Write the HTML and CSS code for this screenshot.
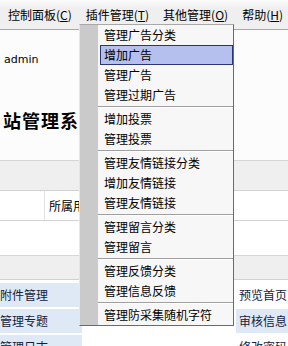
FILE: index.html
```html
<!DOCTYPE html>
<html lang="zh-CN">
<head>
  <meta charset="UTF-8" />
  <title>网站管理系统</title>
  <link rel="stylesheet" href="styles.css">
</head>
<body>

<div class="menubar">
  <span class="menu-title">控制面板(<u>C</u>)</span>
  <span class="menu-title">插件管理(<u>T</u>)</span>
  <span class="menu-title">其他管理(<u>O</u>)</span>
  <span class="menu-title">帮助(<u>H</u>)</span>
</div>

<div class="head">
  <div class="user">admin</div>
  <h1 class="site-title">站管理系统</h1>
</div>

<div class="band"></div>

<div class="owner-row">
  <div class="owner-left"></div>
  <div class="owner-label">所属用户</div>
</div>

<div class="blank"></div>

<div class="band band-low"></div>

<div class="links">
  <div class="link blue">附件管理</div>
  <div class="link"></div>
  <div class="link">预览首页</div>
  <div class="link blue">管理专题</div>
  <div class="link"></div>
  <div class="link blue">审核信息</div>
  <div class="link blue">管理日志</div>
  <div class="link"></div>
  <div class="link">修改密码</div>
</div>

<!-- open dropdown of 插件管理 -->
<div class="dropdown">
  <div class="item">管理广告分类</div>
  <div class="item active">增加广告</div>
  <div class="item">管理广告</div>
  <div class="item">管理过期广告</div>
  <div class="sep"></div>
  <div class="item">增加投票</div>
  <div class="item">管理投票</div>
  <div class="sep"></div>
  <div class="item">管理友情链接分类</div>
  <div class="item">增加友情链接</div>
  <div class="item">管理友情链接</div>
  <div class="sep"></div>
  <div class="item">管理留言分类</div>
  <div class="item">管理留言</div>
  <div class="sep"></div>
  <div class="item">管理反馈分类</div>
  <div class="item">管理信息反馈</div>
  <div class="sep"></div>
  <div class="item">管理防采集随机字符</div>
</div>

</body>
</html>
```

FILE: styles.css
```css
body {
  margin: 0;
  font-family: "Noto Sans CJK SC", "DejaVu Sans", sans-serif;
  font-size: 12px;
  color: #000;
  background: #fff;
  overflow: hidden;
  position: relative;
}
u {
  text-decoration: underline;
}
.menubar {
  height: 29px;
  display: flex;
  align-items: center;
  padding-left: 1px;
  background: linear-gradient(#fbfbfb, #efefef 8px);
  border-bottom: 1px solid #a8a8a8;
  white-space: nowrap;
}
.menu-title {
  padding: 0 7px;
  line-height: 18px;
}
.head {
  height: 130px;
  background: #fcfcfc;
  overflow: hidden;
}
.user {
  padding: 24px 0 0 4px;
  font-family: "DejaVu Sans", sans-serif;
  font-size: 11px;
  line-height: 12px;
}
.site-title {
  margin: 43px 0 0 3px;
  font-family: "Noto Sans CJK SC", serif;
  font-size: 18px;
  line-height: 22px;
  font-weight: bold;
  letter-spacing: 1px;
  white-space: nowrap;
}
.band {
  height: 29px;
  background: #efefef;
  border-top: 1px solid #d6d6d6;
  border-bottom: 1px solid #d2d2d2;
}
.owner-row {
  display: flex;
  height: 29px;
  border-bottom: 1px solid #d2d2d2;
  background: #fff;
}
.owner-left {
  width: 44px;
  border-right: 1px solid #e2e2e2;
}
.owner-label {
  padding-left: 4px;
  line-height: 29px;
}
.blank {
  height: 34px;
  background: #fff;
}
.band-low {
  height: 23px;
}
.links {
  display: grid;
  grid-template-columns: 82px 154px 1fr;
  grid-auto-rows: 24px;
  row-gap: 2px;
  padding-top: 3px;
  background: #fff;
}
.link {
  line-height: 24px;
  font-size: 12px;
  color: #14213d;
  white-space: nowrap;
  overflow: hidden;
}
.link:nth-child(3n) {
  padding-left: 3px;
}
.blue {
  background: #dfe9f5;
}
.dropdown {
  position: absolute;
  left: 79px;
  top: 24px;
  width: 155px;
  box-sizing: border-box;
  border: 1px solid #6a6a6a;
  border-left-color: #e6e6e6;
  border-top-color: #a8a8a8;
  background: linear-gradient(to right, #cacaca 0 18px, #f7f7f7 18px);
}
.item {
  margin-left: 20px;
  height: 18px;
  line-height: 18px;
  padding-left: 3px;
  border: 1px solid transparent;
  white-space: nowrap;
}
.item.active {
  background: #b6c0ee;
  border-color: #2b3475;
}
.sep {
  margin-left: 18px;
  height: 4px;
  background: linear-gradient(#f7f7f7 0 1px, #a0a0a0 1px 2px, #fff 2px 3px, #f7f7f7 3px);
}
```
